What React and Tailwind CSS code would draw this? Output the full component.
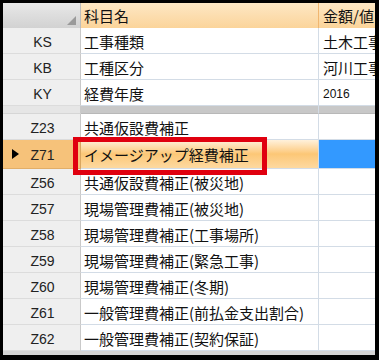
import React from 'react';

const jp = { fontFamily: '"MS UI Gothic", "Noto Sans CJK JP", sans-serif' };
const latin = { fontFamily: '"Liberation Sans", Arial, sans-serif' };

const topRows = [
  { code: 'KS', name: '工事種類', value: '土木工事' },
  { code: 'KB', name: '工種区分', value: '河川工事' },
  { code: 'KY', name: '経費年度', value: '2016' },
];

const bottomRows = [
  { code: 'Z23', name: '共通仮設費補正' },
  { code: 'Z71', name: 'イメージアップ経費補正', selected: true },
  { code: 'Z56', name: '共通仮設費補正(被災地)' },
  { code: 'Z57', name: '現場管理費補正(被災地)' },
  { code: 'Z58', name: '現場管理費補正(工事場所)' },
  { code: 'Z59', name: '現場管理費補正(緊急工事)' },
  { code: 'Z60', name: '現場管理費補正(冬期)' },
  { code: 'Z61', name: '一般管理費補正(前払金支出割合)' },
  { code: 'Z62', name: '一般管理費補正(契約保証)' },
];

const Row = ({ code, name, value, selected, h = 'h-[26px]' }) => (
  <div className={`grid grid-cols-[78px_238px_56px] shrink-0 ${h}`}>
    {/* 行ヘッダ */}
    <div
      className={`relative flex items-center justify-center pt-[3px] border-r border-b text-[14px] ${
        selected
          ? 'bg-[#f6c27a] border-r-[#d9a660] border-b-[#e2ae68]'
          : 'bg-[#efefef] border-r-[#c9c9c9] border-b-[#dcdcdc]'
      } text-[#222]`}
      style={latin}
    >
      {selected && (
        <svg className="absolute left-[9px] top-1/2 -translate-y-1/2" width="7" height="10" viewBox="0 0 7 10">
          <path d="M0 0 L7 5 L0 10 Z" fill="#000" />
        </svg>
      )}
      <span className="pl-[2px]">{code}</span>
    </div>
    {/* 科目名 */}
    <div
      className={`flex items-center pl-[3px] pt-[3px] border-r border-b border-r-[#d3dce6] border-b-[#d3dce6] text-[15px] whitespace-nowrap overflow-hidden ${
        selected ? 'bg-gradient-to-b from-[#fff1db] via-[#fcc776] to-[#fdd9a0]' : 'bg-white'
      } text-[#111]`}
      style={jp}
    >
      {name}
    </div>
    {/* 金額/値 */}
    <div
      className={`flex items-center pl-[4px] pt-[3px] border-b border-b-[#d3dce6] whitespace-nowrap overflow-hidden ${
        selected ? 'bg-[#3399ff]' : 'bg-white'
      } ${value === '2016' ? 'text-[12px]' : 'text-[15px]'} text-[#111]`}
      style={value === '2016' ? latin : jp}
    >
      {value}
    </div>
  </div>
);

export default function App() {
  return (
    <div className="relative w-[379px] h-[360px] bg-black pt-[3px] pl-[3px] pr-[4px] pb-[5px]">
      <div className="flex flex-col h-full bg-[#d4d4d4] overflow-hidden">
        {/* ヘッダ */}
        <div className="grid grid-cols-[78px_238px_56px] h-[25px] shrink-0">
          <div className="relative bg-gradient-to-b from-[#e8e8e8] to-[#d2d2d2] border-r border-r-[#bdbdbd] border-b-2 border-b-[#c4c4c4]">
            <svg className="absolute right-[4px] bottom-[3px]" width="9" height="9" viewBox="0 0 9 9">
              <path d="M9 0 L9 9 L0 9 Z" fill="#9a9a9a" />
            </svg>
          </div>
          <div
            className="flex items-center pl-[3px] pt-[2px] bg-gradient-to-b from-[#fde7c4] to-[#fbd49a] border-r border-r-[#f0b670] border-b-2 border-b-[#f2a94e] text-[15px] text-[#111]"
            style={jp}
          >
            科目名
          </div>
          <div
            className="flex items-center pl-[4px] pt-[2px] bg-gradient-to-b from-[#fde7c4] to-[#fbd49a] border-b-2 border-b-[#f2a94e] text-[15px] text-[#111] whitespace-nowrap overflow-hidden"
            style={jp}
          >
            金額/値
          </div>
        </div>

        {topRows.map((r) => (
          <Row key={r.code} {...r} />
        ))}

        {/* 区切り */}
        <div className="grid grid-cols-[78px_238px_56px] h-[8px] shrink-0">
          <div className="bg-[#e6e6e6] border-r border-r-[#c9c9c9] border-b border-b-[#d6d6d6]" />
          <div className="bg-[#c8c8c8] border-r border-r-[#d3dce6] border-b border-b-[#b8b8b8]" />
          <div className="bg-[#c8c8c8] border-b border-b-[#b8b8b8]" />
        </div>

        {bottomRows.map((r) => (
          <Row key={r.code} {...r} h={r.selected ? 'h-[29px]' : 'h-[26px]'} />
        ))}
      </div>

      {/* 赤枠 */}
      <div className="absolute left-[73px] top-[137px] w-[194px] h-[38px] border-[5px] border-[#e0000f]" />
    </div>
  );
}
